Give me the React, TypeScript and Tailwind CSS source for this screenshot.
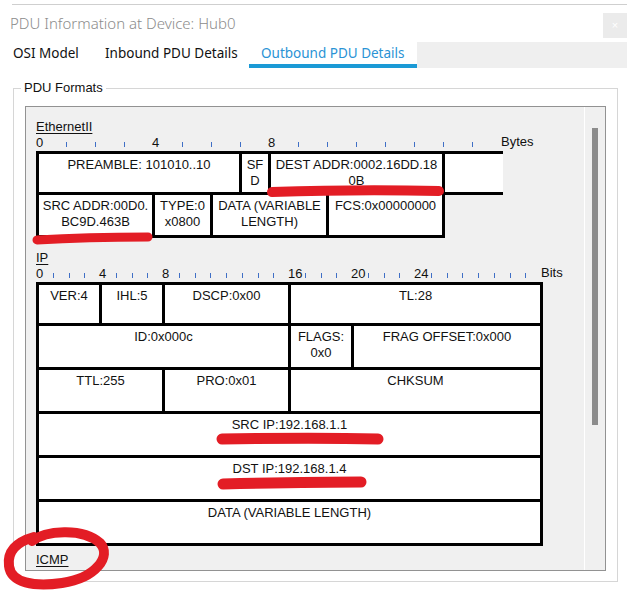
import type { ReactNode } from "react";

const BYTE = 29;
const BIT = 15.75;

function Cell({ className, lines }: { className: string; lines: ReactNode[] }) {
  return (
    <div
      className={`shrink-0 border-r-[3px] border-b-[3px] border-black bg-white pt-[3px] text-center text-[13px] leading-[16px] text-[#111] ${className}`}
    >
      {lines.map((l, i) => (
        <div key={i} className="whitespace-nowrap">
          {l}
        </div>
      ))}
    </div>
  );
}

function Ruler({
  unit,
  labels,
  count,
  step,
  className,
}: {
  unit: string;
  labels: number[];
  count: number;
  step: number;
  className: string;
}) {
  const ticks = Array.from({ length: count }, (_, i) => i).filter((i) => !labels.includes(i));
  return (
    <div className={`relative w-[540px] ${className}`}>
      {labels.map((n) => (
        <span
          key={n}
          className="absolute top-[2px] text-[13px] leading-[13px] text-[#111]"
          style={{ left: Math.round(n * step) }}
        >
          {n}
        </span>
      ))}
      {ticks.map((n) => (
        <span
          key={n}
          className="absolute top-[8px] h-[5px] w-px bg-[#3f6fc6]"
          style={{ left: Math.round(n * step) + 1 }}
        />
      ))}
      <span
        className="absolute top-[1px] text-[13px] leading-[13px] text-[#111]"
        style={{ left: Math.round(count * step) + 1 }}
      >
        {unit}
      </span>
    </div>
  );
}

function Label({ children, className }: { children: ReactNode; className: string }) {
  return (
    <div className={`h-[14px] text-[13px] leading-[14px] text-[#111] underline underline-offset-2 ${className}`}>
      {children}
    </div>
  );
}

function Ethernet() {
  return (
    <div>
      <div className="flex w-fit border-t-[3px] border-l-[3px] border-black">
        <Cell className="w-[203px] h-[41px]" lines={["PREAMBLE: 101010..10"]} />
        <Cell className="w-[29px] h-[41px]" lines={["SF", "D"]} />
        <Cell className="w-[174px] h-[41px]" lines={["DEST ADDR:0002.16DD.18", "0B"]} />
        <div className="h-[41px] w-[58px] border-b-[3px] border-black bg-white" />
      </div>
      <div className="flex w-fit border-l-[3px] border-black">
        <Cell className="w-[116px] h-[43px]" lines={["SRC ADDR:00D0.", "BC9D.463B"]} />
        <Cell className="w-[58px] h-[43px]" lines={["TYPE:0", "x0800"]} />
        <Cell className="w-[116px] h-[43px]" lines={["DATA (VARIABLE", "LENGTH)"]} />
        <Cell className="w-[116px] h-[43px]" lines={["FCS:0x00000000"]} />
      </div>
    </div>
  );
}

function Ip() {
  return (
    <div className="w-fit border-t-[3px] border-l-[3px] border-black">
      <div className="flex">
        <Cell className="w-[63px] h-[41px]" lines={["VER:4"]} />
        <Cell className="w-[63px] h-[41px]" lines={["IHL:5"]} />
        <Cell className="w-[126px] h-[41px]" lines={["DSCP:0x00"]} />
        <Cell className="w-[252px] h-[41px]" lines={["TL:28"]} />
      </div>
      <div className="flex">
        <Cell className="w-[252px] h-[44px]" lines={["ID:0x000c"]} />
        <Cell className="w-[63px] h-[44px]" lines={["FLAGS:", "0x0"]} />
        <Cell className="w-[189px] h-[44px]" lines={["FRAG OFFSET:0x000"]} />
      </div>
      <div className="flex">
        <Cell className="w-[126px] h-[44px]" lines={["TTL:255"]} />
        <Cell className="w-[126px] h-[44px]" lines={["PRO:0x01"]} />
        <Cell className="w-[252px] h-[44px]" lines={["CHKSUM"]} />
      </div>
      <Cell className="w-[504px] h-[44px]" lines={["SRC IP:192.168.1.1"]} />
      <Cell className="w-[504px] h-[44px]" lines={["DST IP:192.168.1.4"]} />
      <Cell className="w-[504px] h-[44px]" lines={["DATA (VARIABLE LENGTH)"]} />
    </div>
  );
}

function Marks() {
  return (
    <svg className="pointer-events-none absolute inset-0" width="627" height="596" viewBox="0 0 627 596">
      <g fill="none" stroke="#e31d25" strokeLinecap="round" strokeLinejoin="round">
        <path d="M272 192 C 330 190, 400 190, 439 191" strokeWidth="10" />
        <path d="M37 240 C 70 238, 120 237, 148 237" strokeWidth="9" />
        <path d="M222 439 C 280 438, 340 438, 378 439" strokeWidth="11" />
        <path d="M223 484 C 270 483, 330 482, 361 482" strokeWidth="11" />
        <path
          d="M32 541 C 45 531, 82 527, 100 543 C 112 556, 96 578, 62 583 C 34 587, 11 583, 9 566 C 7 552, 16 542, 34 537"
          strokeWidth="10"
        />
      </g>
    </svg>
  );
}

export default function App() {
  return (
    <div className="relative h-[596px] w-[627px] overflow-hidden bg-white font-['Liberation_Sans',Arial,sans-serif]">
      <div className="h-[4px]" />
      <div className="ml-[12px] h-px bg-[#cfcfcf]" />

      {/* title */}
      <div className="mt-[8px] flex h-[25px] items-start justify-between">
        <div className="pl-[10px] font-['Noto_Sans',sans-serif] text-[15px] font-light leading-[20px] text-[#8c8c8c]">
          PDU Information at Device: Hub0
        </div>
        <div className="flex h-[25px] w-[24px] items-center justify-center bg-[#ebebeb] text-[11px] leading-none text-white">
          ×
        </div>
      </div>

      {/* tabs */}
      <div className="mt-[4px] flex h-[26px] font-['Noto_Sans',sans-serif] text-[13.5px]">
        <div className="flex w-[93px] items-center pb-[3px] pl-[13px] text-[#111]">OSI Model</div>
        <div className="flex w-[156px] items-center pb-[3px] pl-[12px] text-[#111]">Inbound PDU Details</div>
        <div className="flex w-[168px] items-center border-b-[4px] border-[#1b9ad6] pb-[0px] pl-[12px] text-[#2a93d5]">
          Outbound PDU Details
        </div>
        <div className="flex-1 bg-[#efefef]" />
      </div>

      {/* group box */}
      <div className="relative ml-[13px] mt-[20px] h-[494px] w-[605px] border border-[#d6d6d6]">
        <span className="absolute -top-[9px] left-[7px] bg-white px-[3px] text-[13px] leading-[15px] text-[#111]">
          PDU Formats
        </span>

        <div className="ml-[11px] mt-[17px] flex h-[465px] w-[581px] overflow-hidden border border-[#929292] bg-[#f0f0f0]">
          <div className="w-[558px] shrink-0 pl-[10px]">
            <Label className="mt-[13px]">EthernetII</Label>
            <Ruler unit="Bytes" labels={[0, 4, 8]} count={16} step={BYTE} className="h-[17px]" />
            <Ethernet />

            <Label className="mt-[13px]">IP</Label>
            <Ruler unit="Bits" labels={[0, 4, 8, 16, 20, 24]} count={32} step={BIT} className="h-[17px]" />
            <Ip />

            <Label className="mt-[7px]">ICMP</Label>
            <Ruler unit="Bits" labels={[0, 8, 16]} count={32} step={BIT} className="h-[17px]" />
          </div>

          {/* scrollbar */}
          <div className="w-[22px] shrink-0 border-l border-white">
            <div className="ml-[7px] mt-[21px] h-[297px] w-[6px] bg-[#8c8c8c]" />
          </div>
        </div>
      </div>

      <Marks />
    </div>
  );
}
